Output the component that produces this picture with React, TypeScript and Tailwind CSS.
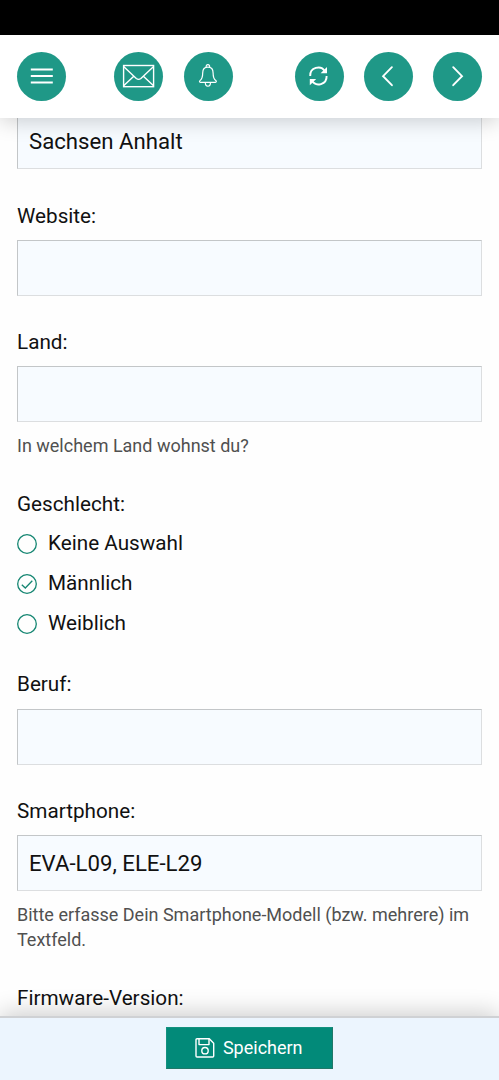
import type { ReactNode } from "react";

const GENDERS = [
  { id: "none", label: "Keine Auswahl" },
  { id: "male", label: "Männlich" },
  { id: "female", label: "Weiblich" },
];

function MenuIcon() {
  return (
    <svg width="50" height="50" viewBox="0 0 50 50" fill="none" stroke="currentColor" strokeWidth="2">
      <path d="M13.8 18.5h22M13.8 25h22M13.8 31.5h22" />
    </svg>
  );
}

function MailIcon() {
  return (
    <svg width="50" height="50" viewBox="0 0 50 50" fill="none" stroke="currentColor" strokeWidth="1.4">
      <rect x="9.6" y="14.5" width="30" height="21.2" />
      <path d="M9.6 15.5l12.7 12q2.3 1.8 4.6 0l12.7-12M9.6 34.8l10.2-9.6M39.6 34.8l-10.2-9.6" />
    </svg>
  );
}

function BellIcon() {
  return (
    <svg width="50" height="50" viewBox="0 0 50 50" fill="none" stroke="currentColor" strokeWidth="1.2">
      <path d="M23.3 16.3a1.8 1.8 0 1 1 3.2 0" />
      <path d="M24.9 16.2c-3.5 0-5.2 2.5-5.2 5.8 0 4.8-.9 6.2-2.7 7.6-.8.6-.7 1.7.4 1.7h15c1.1 0 1.2-1.1.4-1.7-1.8-1.4-2.7-2.8-2.7-7.6 0-3.3-1.7-5.8-5.2-5.8z" />
      <path d="M22.3 31.4c0 4.9 5.2 4.9 5.2 0" />
    </svg>
  );
}

function RefreshIcon() {
  return (
    <svg width="50" height="50" viewBox="0 0 50 50" fill="none" stroke="currentColor" strokeWidth="1.9">
      <path d="M16.2 25a8 8 0 0 1 14.8-4.6M32.6 25a8 8 0 0 1-14.8 4.6" />
      <path d="M33 16v6.2h-6.4zM15.8 34.2V28h6.4z" fill="currentColor" stroke="none" />
    </svg>
  );
}

function ChevronIcon({ flip = false }: { flip?: boolean }) {
  return (
    <svg width="50" height="50" viewBox="0 0 50 50" fill="none" stroke="currentColor" strokeWidth="1.9" strokeLinecap="round">
      <path d={flip ? "M20.2 16.2l8.8 9-8.8 9" : "M28.9 16.2l-8.8 9 8.8 9"} />
    </svg>
  );
}

function SaveIcon() {
  return (
    <svg width="20" height="20" viewBox="0 0 20 20" fill="none" stroke="currentColor" strokeWidth="1.4" strokeLinejoin="round">
      <path d="M2 .8h12.3l4.4 4.4V18a1 1 0 0 1-1 1H2a1 1 0 0 1-1-1V1.8a1 1 0 0 1 1-1z" />
      <path d="M4 1v5.6h10V1" />
      <circle cx="10" cy="12.7" r="3.2" />
    </svg>
  );
}

function RoundButton({ label, children }: { label: string; children: ReactNode }) {
  return (
    <button
      type="button"
      aria-label={label}
      className="flex h-[49px] w-[49px] shrink-0 items-center justify-center rounded-full bg-[#1f9887] text-white [&>svg]:shrink-0"
    >
      {children}
    </button>
  );
}

function Label({ children }: { children: ReactNode }) {
  return <div className="text-[20.7px] leading-6">{children}</div>;
}

function TextBox({ value = "" }: { value?: string }) {
  return (
    <div className="flex h-14 items-center border border-[#dcdee0] border-t-[#c3c6c8] border-l-[#c3c6c8] bg-[#f7fbff] px-[11px] pt-[1.5px] text-[22.2px]">
      {value}
    </div>
  );
}

function Hint({ children }: { children: ReactNode }) {
  return <p className="text-[18px] leading-[25px] text-[#505050]">{children}</p>;
}

function Field({ label, value, hint }: { label: string; value?: string; hint?: string }) {
  return (
    <div>
      <Label>{label}</Label>
      <div className="mt-[12.5px]">
        <TextBox value={value} />
      </div>
      {hint && (
        <div className="mt-[10.5px]">
          <Hint>{hint}</Hint>
        </div>
      )}
    </div>
  );
}

function Radio({ label, checked }: { label: string; checked: boolean }) {
  return (
    <div role="radio" aria-checked={checked} className="flex h-10 items-center gap-[11px] text-[20.7px]">
      <svg width="20" height="20" viewBox="0 0 20 20" fill="none" stroke="#158672" strokeWidth="1.3">
        <circle cx="10" cy="10" r="9.3" />
        {checked && <path d="M4.8 10.7l3.5 3.3 7-7.2" />}
      </svg>
      <span className="pt-px">{label}</span>
    </div>
  );
}

export default function App() {
  return (
    <div className="flex h-[1080px] w-full flex-col overflow-hidden bg-[#fefefe] font-[Roboto,sans-serif] text-[#111]">
      <div className="h-[34.5px] shrink-0 bg-black" />
      <header className="z-10 flex h-[83.5px] shrink-0 items-center bg-white pr-[17px] pl-[17.4px] shadow-[0_3px_20px_rgba(0,0,0,0.19)]">
        <RoundButton label="Menü">
          <MenuIcon />
        </RoundButton>
        <div className="ml-12 flex gap-[20.3px]">
          <RoundButton label="Nachrichten">
            <MailIcon />
          </RoundButton>
          <RoundButton label="Benachrichtigungen">
            <BellIcon />
          </RoundButton>
        </div>
        <div className="ml-auto flex gap-[20.2px]">
          <RoundButton label="Neu laden">
            <RefreshIcon />
          </RoundButton>
          <RoundButton label="Zurück">
            <ChevronIcon />
          </RoundButton>
          <RoundButton label="Weiter">
            <ChevronIcon flip />
          </RoundButton>
        </div>
      </header>

      <main className="min-h-0 flex-1 overflow-hidden px-[17px]">
        <div className="-mt-[5px]">
          <TextBox value="Sachsen Anhalt" />
        </div>
        <div className="mt-[34.5px]">
          <Field label="Website:" />
        </div>
        <div className="mt-[33.5px]">
          <Field label="Land:" hint="In welchem Land wohnst du?" />
        </div>
        <div className="mt-[34px]">
          <Label>Geschlecht:</Label>
          <div role="radiogroup" className="mt-2">
            {GENDERS.map((gender) => (
              <Radio key={gender.id} label={gender.label} checked={gender.id === "male"} />
            ))}
          </div>
        </div>
        <div className="mt-[28.6px]">
          <Field label="Beruf:" />
        </div>
        <div className="mt-[34px]">
          <Field
            label="Smartphone:"
            value="EVA-L09, ELE-L29"
            hint="Bitte erfasse Dein Smartphone-Modell (bzw. mehrere) im Textfeld."
          />
        </div>
        <div className="mt-[34px]">
          <Label>Firmware-Version:</Label>
        </div>
      </main>

      <footer className="z-10 flex h-16 shrink-0 items-start justify-center border-t-2 border-[#cfd1d4] bg-[#ecf5fe] pt-[9px] shadow-[0_-3px_24px_rgba(0,0,0,0.2)]">
        <button
          type="button"
          className="flex h-[42px] w-[167px] items-center justify-center gap-[7.5px] border border-t-[#13917f] border-r-[#207868] border-b-[#207868] border-l-[#13917f] bg-[#028a79] pr-px pb-px text-[18px] text-white"
        >
          <SaveIcon />
          <span>Speichern</span>
        </button>
      </footer>
    </div>
  );
}
